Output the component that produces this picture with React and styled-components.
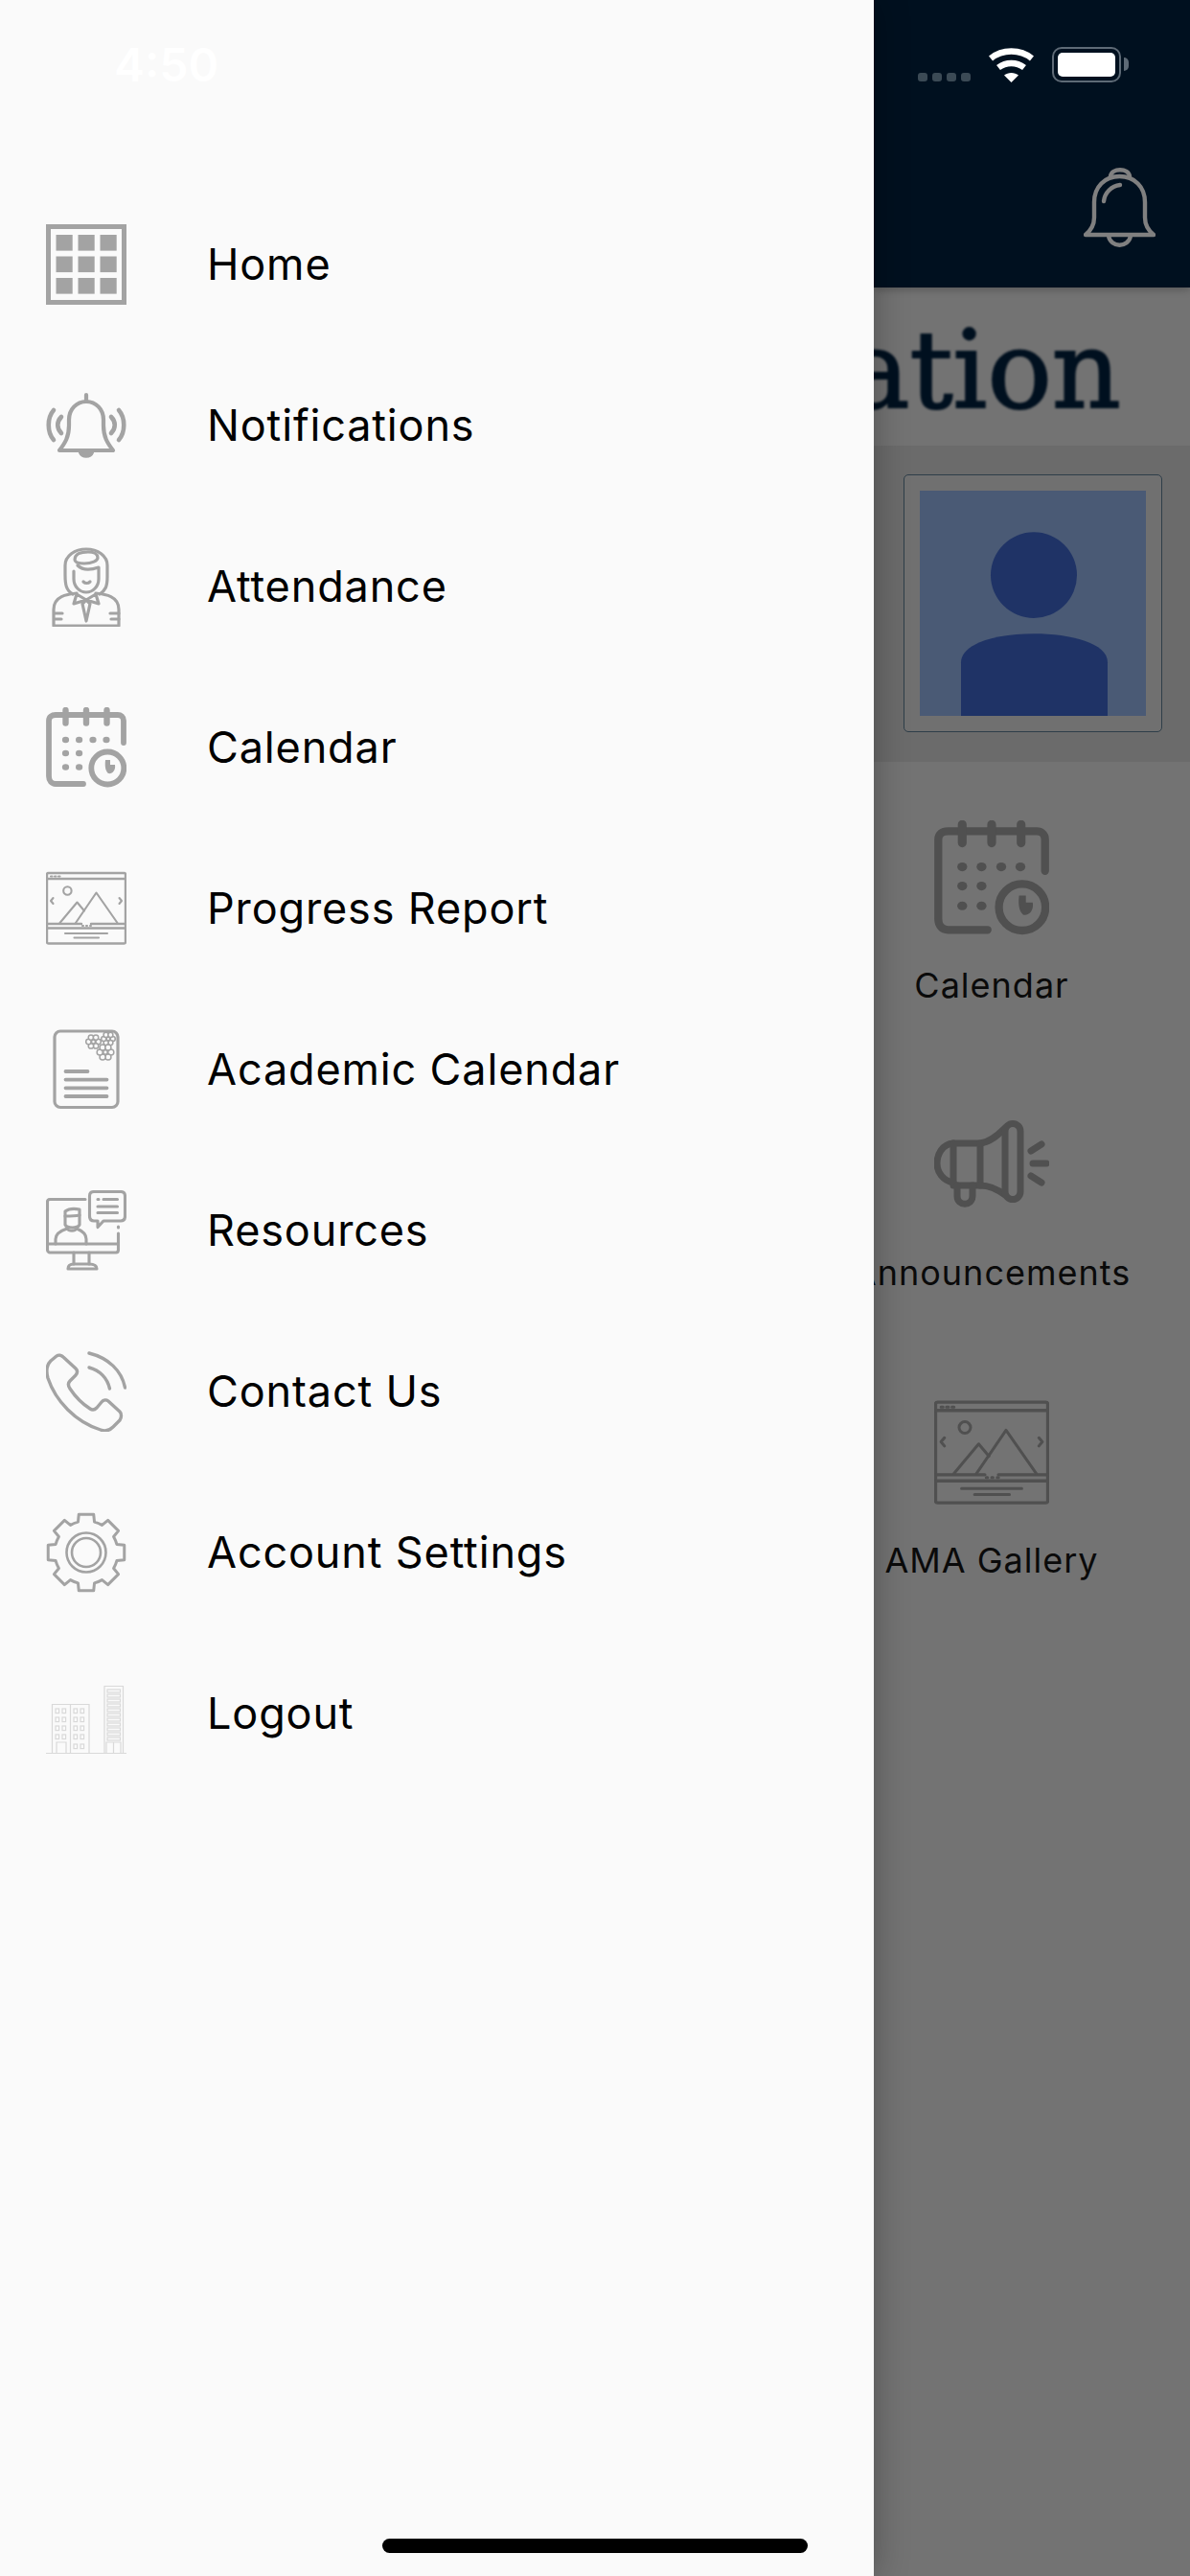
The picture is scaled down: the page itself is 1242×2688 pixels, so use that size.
import React from 'react';
import styled, {createGlobalStyle} from 'styled-components';

const GlobalStyle = createGlobalStyle`
  html, body {
    margin: 0;
    padding: 0;
    background: #737373;
  }
  * {
    box-sizing: border-box;
  }
`

// STYLED COMPONENTS START
const Page = styled.div`
  position: relative;
  width: 1242px;
  height: 2688px;
  display: flex;
  overflow: hidden;
  font-family: Inter, "Liberation Sans", sans-serif;
`

const Drawer = styled.nav`
  position: relative;
  z-index: 2;
  width: 912px;
  flex-shrink: 0;
  background: #fafafa;
  box-shadow: 0 0 34px rgba(0, 0, 0, 0.3);
`

const DrawerStatus = styled.div`
  height: 192px;
  padding: 48px 0 0 119px;
`

const Time = styled.span`
  display: block;
  font-size: 48px;
  line-height: 39px;
  font-weight: 600;
  color: #ffffff;
`

const MenuList = styled.ul`
  list-style: none;
  margin: 0;
  padding: 0;
`

const MenuRow = styled.li`
  height: 168px;
  display: flex;
  align-items: center;
  padding-left: 48px;
  gap: 84px;
`

const MenuIcon = styled.svg`
  width: 84px;
  height: 84px;
  flex-shrink: 0;
  color: ${props => props.$faded ? '#d9d9d9' : '#a3a3a3'};
`

const MenuLabel = styled.span`
  font-size: 45px;
  line-height: 56px;
  font-weight: 420;
  letter-spacing: 0.85px;
  color: #000000;
`

const HomeBar = styled.div`
  position: absolute;
  z-index: 3;
  left: 399px;
  bottom: 24px;
  width: 444px;
  height: 15px;
  border-radius: 8px;
  background: #000000;
`

const Behind = styled.main`
  flex: 1;
  min-width: 0;
  display: flex;
  flex-direction: column;
  overflow: hidden;
  background: #737373;
`

const Header = styled.header`
  position: relative;
  z-index: 1;
  height: 300px;
  flex-shrink: 0;
  display: flex;
  flex-direction: column;
  background: #00101f;
  box-shadow: 0 2px 8px rgba(0, 0, 0, 0.25);
`

const StatusIcons = styled.div`
  display: flex;
  align-items: flex-end;
  justify-content: flex-end;
  height: 86px;
  padding-right: 72px;
`

const SignalDots = styled.div`
  display: flex;
  gap: 5px;
  margin: 0 19px 1px 0;
`

const SignalDot = styled.span`
  width: 10px;
  height: 9px;
  border-radius: 3px;
  background: #3b4a55;
`

const Battery = styled.div`
  position: relative;
  width: 72px;
  height: 37px;
  margin-left: 19px;
  padding: 4px;
  border: 2.5px solid #5e6a76;
  border-radius: 10px;

  &::after {
    content: '';
    position: absolute;
    right: -10px;
    top: 9px;
    width: 5px;
    height: 14px;
    border-radius: 0 5px 5px 0;
    background: #5e6a76;
  }
`

const BatteryFill = styled.div`
  width: 100%;
  height: 100%;
  border-radius: 5px;
  background: #ffffff;
`

const BellRow = styled.div`
  display: flex;
  justify-content: flex-end;
  padding: 89px 36px 0 0;
`

const BellIcon = styled.svg`
  width: 75px;
  height: 83px;
  color: #808080;
`

const TitleBand = styled.div`
  height: 165px;
  flex-shrink: 0;
  display: flex;
  align-items: center;
  justify-content: flex-end;
  padding: 6px 72px 0 0;
  background: #737373;
`

const Title = styled.h1`
  margin: 0;
  font-family: "DejaVu Serif", "Liberation Serif", serif;
  font-size: 112px;
  line-height: 130px;
  font-weight: 400;
  white-space: nowrap;
  color: #00101f;
  -webkit-text-stroke: 2px #00101f;
  filter: blur(0.8px);
`

const ProfileBand = styled.section`
  height: 330px;
  flex-shrink: 0;
  padding: 30px 30px 0 31px;
  background: #6b6b6b;
`

const PhotoFrame = styled.div`
  width: 270px;
  height: 269px;
  padding: 16px;
  border: 1.5px solid #2e3e49;
  border-radius: 5px;
  background: #707070;
`

const AvatarIcon = styled.svg`
  display: block;
  width: 100%;
  height: 100%;
`

const Shortcuts = styled.div`
  display: flex;
  flex-direction: column;
  align-items: center;
  padding: 61px 84px 0 0;
`

const Shortcut = styled.div`
  height: 300px;
  display: flex;
  flex-direction: column;
  align-items: center;
  flex-shrink: 0;
`

const ShortcutIcon = styled.svg`
  width: 120px;
  height: 120px;
  flex-shrink: 0;
  color: #505050;
`

const ShortcutLabel = styled.span`
  margin-top: 30px;
  font-size: 36px;
  line-height: 44px;
  letter-spacing: 1px;
  white-space: nowrap;
  color: #0a0a0a;
`
// STYLED COMPONENTS END

const HomeGlyph = () => (
  <>
    <rect x="2.5" y="2.5" width="79" height="79" fill="none" stroke="currentColor" strokeWidth="5" />
    {[11, 33.5, 56].map(y => [10.5, 33.5, 56.5].map(x => (
      <rect key={`${x}-${y}`} x={x} y={y} width="17.2" height="16.6" fill="currentColor" />
    )))}
  </>
)

const NotificationGlyph = () => (
  <g fill="none" stroke="currentColor" strokeWidth="4.2" strokeLinecap="round" strokeLinejoin="round">
    <path d="M14 68 C20 60 24 54 24 42 V36 C24 25 32 17 42 17 C52 17 60 25 60 36 V42 C60 54 64 60 70 68 Z" />
    <path d="M42 10 V16" />
    <path d="M36 70 C38 75 46 75 48 70" fill="currentColor" />
    <path d="M8 26 C1 34 1 49 8 57" strokeWidth="4.6" />
    <path d="M16 33 C11 38 11 45 16 50" strokeWidth="4.6" />
    <path d="M76 26 C83 34 83 49 76 57" strokeWidth="4.6" />
    <path d="M68 33 C73 38 73 45 68 50" strokeWidth="4.6" />
  </g>
)

const AttendanceGlyph = () => (
  <g fill="none" stroke="currentColor" strokeWidth="3.2" strokeLinecap="round" strokeLinejoin="round">
    <path d="M28 50 C21 46 20 40 20 30 V20 C20 10 30 3 42 3 C54 3 64 10 64 20 V32 C64 42 62 46 56 50" />
    <path d="M30 14 C30 8 36 6 44 6 C50 6 54 8 54 12 C54 15 48 18 40 18 C34 18 30 17 30 14 Z" />
    <path d="M29 26 V34 C29 42 35 48 42 48 C49 48 55 42 55 34 V22 C46 25 38 25 33 20" />
    <path d="M39 37 C41 39 44 39 46 37" />
    <path d="M32 49 C22 50 8 52 8 66 V83 H76 V66 C76 52 62 50 52 49" />
    <path d="M42 56 L32 50 L29 60 Z M42 56 L52 50 L55 60 Z" />
    <path d="M38 60 L42 78 L46 60 L42 56 Z" />
    <path d="M9 70 H17 M9 76 H16 M67 70 H76 M68 76 H76" />
  </g>
)

const CalendarGlyph = () => (
  <>
    <g fill="none" stroke="currentColor" strokeLinecap="round" strokeLinejoin="round" strokeWidth="5.8">
      <path d="M81 37 V14 C81 10 78 8 75 8 H10 C6 8 3 10 3 14 V72 C3 77 6 80 10 80 H39" />
      <path d="M20.5 3 V16.5 M42 3 V16.5 M63.5 3 V16.5" strokeWidth="6.4" />
      <circle cx="64.3" cy="63.5" r="17" />
    </g>
    {[[20.5, 34], [34.6, 34], [49, 34], [63, 34], [20.5, 48], [34.6, 48], [20.5, 62.5], [34.6, 62.5]].map(([x, y]) => (
      <ellipse key={`${x}-${y}`} cx={x} cy={y} rx="3.6" ry="3.2" fill="currentColor" />
    ))}
    <path d="M62 55 H67 V60 H72 C73 66 69 70 65 69 C63 67 61 64 62 55 Z" fill="currentColor" />
  </>
)

const GalleryGlyph = () => (
  <g fill="none" stroke="currentColor" strokeWidth="2.1" strokeLinecap="round" strokeLinejoin="round">
    <rect x="1" y="5" width="82" height="73.5" rx="1.5" strokeWidth="2.4" />
    <path d="M1 11 H83 M1 58 H37 M47 58 H83 M1 62.5 H83" strokeWidth="2.4" />
    <path d="M5 8.5 H6.5 M9 8.5 H10.5 M13 8.5 H14.5 M38 60 H39 M42 60 H43 M46 60 H47" />
    <circle cx="22.4" cy="23.5" r="4.2" />
    <path d="M7.5 31 L5 34 L7.5 37 M76.5 31 L79 34 L76.5 37" />
    <path d="M31 57 L52.5 25.5 L74.5 57" />
    <path d="M14.5 57 L32.5 35.5 L40 44.5" />
    <path d="M20 68 H64 M29.5 72.5 H55" />
  </g>
)

const FLOWERS = [[49.5, 13, 7.5], [65, 10, 7], [62, 24, 8.5]]

const AcademicGlyph = () => (
  <g fill="none" stroke="currentColor" strokeLinecap="round">
    <rect x="9" y="2" width="66" height="79.5" rx="6" strokeWidth="3.2" />
    <path d="M20.5 44 H43.5 M20.5 52.6 H63.5 M20.5 61.3 H63.5 M20.5 70 H63.5" strokeWidth="3.8" />
    {FLOWERS.map(([cx, cy, r]) => (
      <g key={cx} strokeWidth="1.5" fill="#fafafa">
        {[0, 60, 120, 180, 240, 300].map(deg => (
          <circle
            key={deg}
            cx={cx + r * 0.68 * Math.cos(deg * Math.PI / 180)}
            cy={cy + r * 0.68 * Math.sin(deg * Math.PI / 180)}
            r={r * 0.36}
          />
        ))}
        <circle cx={cx} cy={cy} r={r * 0.26} />
      </g>
    ))}
  </g>
)

const ResourcesGlyph = () => (
  <g fill="none" stroke="currentColor" strokeWidth="3.1" strokeLinecap="round" strokeLinejoin="round">
    <path d="M41 9.5 H4 C2 9.5 1.5 11 1.5 12 V62 C1.5 64 3 65 4 65 H73 C75 65 75.5 63 75.5 62 V45" />
    <path d="M1.5 56 H75.5" />
    <path d="M75.5 38 V39" />
    <path d="M29 65 V77 M45 65 V77" />
    <path d="M23 82 C23 78 26 77 29 77 H45 C49 77 53 78 53 82 Z" />
    <path d="M10 56 V51 C10 45 16 42 22 40 C24 43 30 43 32 40 C37 42 42 45 42 51 V56" />
    <path d="M20 36 V22 C24 19 30 19 35 20 V36 C33 40 22 40 20 36 Z" />
    <path d="M20 27 C25 27 30 27 35 26" />
    <path d="M50 1.5 H78 C81 1.5 82.5 3 82.5 6 V27 C82.5 30 81 32 78 32 H60 L54 38.5 V32 H50 C47 32 45.5 30 45.5 27 V6 C45.5 3 47 1.5 50 1.5 Z" />
    <path d="M54 9.5 H55 M60 9.5 H74.5 M54 17 H74.5 M54 23.5 H74.5" />
  </g>
)

const ContactGlyph = () => (
  <g fill="none" stroke="currentColor" strokeWidth="3.4" strokeLinecap="round" strokeLinejoin="round">
    <path d="M5 10 L11 5 C13 3.5 16 4 18 6 L31 18 C33.5 20.5 33 22.5 31 25 L25 31 C23 33 23 36 25 39 C31 48 38 55 46 60 C49 62 51 61 53 59 L58 53 C60 50.5 63 50.5 65 52 L77 63 C79 65 79 69 77 72 L70 79 C66 83 62 84 57 82 C31 74 10 52 2 28 C0 21 1 14 5 10 Z" />
    <path d="M45 2 C65 7 79 20 82.5 38" />
    <path d="M45 17 C56 20 64 28 66.5 39" />
  </g>
)

// 8 teeth, each one a straight flank with an arc between the teeth
const gearPath = () => {
  const point = (deg, r) => {
    const rad = (deg - 90) * Math.PI / 180;
    return `${(42 + r * Math.cos(rad)).toFixed(2)} ${(42 + r * Math.sin(rad)).toFixed(2)}`;
  };
  let d = '';
  for (let i = 0; i < 8; i++) {
    const a = i * 45;
    d += `${i === 0 ? 'M' : 'A 33 33 0 0 1'} ${point(a - 15, 33)} `;
    d += `L ${point(a - 11, 40.5)} L ${point(a + 11, 40.5)} L ${point(a + 15, 33)} `;
  }
  return `${d}A 33 33 0 0 1 ${point(-15, 33)} Z`;
}

const SettingsGlyph = () => (
  <g fill="none" stroke="currentColor" strokeLinejoin="round">
    <path d={gearPath()} strokeWidth="3" />
    <circle cx="42" cy="42" r="20.5" strokeWidth="2.6" />
    <circle cx="42" cy="42" r="15" strokeWidth="2.6" />
  </g>
)

const LogoutGlyph = () => (
  <g fill="none" stroke="currentColor" strokeWidth="1.2">
    <path d="M0 83.5 H84" />
    <path d="M6.5 83.5 V32.5 H45 V83.5 M25.5 32.5 V83.5" />
    <path d="M61 83.5 V13.5 H80.5 V83.5" />
    {[37, 46, 55, 64].map(y => [10, 17, 29, 36].map(x => (
      <rect key={`${x}-${y}`} x={x} y={y} width="3.6" height="4.6" />
    )))}
    <rect x="29" y="74" width="3.6" height="4.6" />
    <rect x="36" y="74" width="3.6" height="4.6" />
    <path d="M11 83.5 V72 H21 V83.5 M63 83.5 V72 H78 V83.5 M70.5 72 V83.5" />
    {[17, 22, 27, 32, 37, 42, 47, 52, 57, 62, 67].map(y => (
      <rect key={y} x="64" y={y} width="13.5" height="3" />
    ))}
  </g>
)

const MegaphoneGlyph = () => (
  <g fill="none" stroke="currentColor" strokeWidth="7" strokeLinecap="round" strokeLinejoin="round">
    <path d="M20 24 C8 25 3 36 3 45 C3 54 9 63 20 65" />
    <path d="M20 24 H48 V68 H20 Z" />
    <path d="M48 24 C58 23 66 16 74 8 M48 68 C58 68 66 72 74 78" />
    <rect x="74" y="3.5" width="16" height="79" rx="8" />
    <path d="M24 68 V79 C24 90 40 90 40 79 V68" />
    <path d="M101 32 L112 25 M103 45 H117 M101 58 L112 65" />
  </g>
)

const MENU = [
  {label: 'Home', glyph: HomeGlyph},
  {label: 'Notifications', glyph: NotificationGlyph},
  {label: 'Attendance', glyph: AttendanceGlyph},
  {label: 'Calendar', glyph: CalendarGlyph},
  {label: 'Progress Report', glyph: GalleryGlyph},
  {label: 'Academic Calendar', glyph: AcademicGlyph},
  {label: 'Resources', glyph: ResourcesGlyph},
  {label: 'Contact Us', glyph: ContactGlyph},
  {label: 'Account Settings', glyph: SettingsGlyph},
  {label: 'Logout', glyph: LogoutGlyph, faded: true},
];

const App = () => {
  return (
    <Page>
      <GlobalStyle />
      <Drawer>
        <DrawerStatus>
          <Time>4:50</Time>
        </DrawerStatus>
        <MenuList>
          {MENU.map(item => (
            <MenuRow key={item.label}>
              <MenuIcon viewBox="0 0 84 84" $faded={item.faded}>
                <item.glyph />
              </MenuIcon>
              <MenuLabel>{item.label}</MenuLabel>
            </MenuRow>
          ))}
        </MenuList>
      </Drawer>
      <Behind>
        <Header>
          <StatusIcons>
            <SignalDots>
              <SignalDot /><SignalDot /><SignalDot /><SignalDot />
            </SignalDots>
            <svg width="47" height="36" viewBox="0 0 47 36">
              <g fill="none" stroke="#ffffff" strokeWidth="6.5">
                <path d="M2 11 C14 1 33 1 45 11" />
                <path d="M10 20.5 C18 14.5 29 14.5 37 20.5" />
              </g>
              <path d="M16 28.5 C20 25 27 25 31 28.5 L23.5 36 Z" fill="#ffffff" />
            </svg>
            <Battery>
              <BatteryFill />
            </Battery>
          </StatusIcons>
          <BellRow>
            <BellIcon viewBox="0 0 75 83">
              <g fill="none" stroke="currentColor" strokeWidth="4.4" strokeLinecap="round" strokeLinejoin="round">
                <path d="M2 70 H73 C67 65 64 60 64 52 V36 C64 20 53 9 37.5 9 C22 9 11 20 11 36 V52 C11 60 8 65 2 70 Z" />
                <path d="M28 9 C29 0 47 0 48 9" />
                <path d="M26 71 C28 84 47 84 49 71" />
                <path d="M21 35 C22 26 29 19 38 18" />
              </g>
            </BellIcon>
          </BellRow>
        </Header>
        <TitleBand>
          <Title>ation</Title>
        </TitleBand>
        <ProfileBand>
          <PhotoFrame>
            <AvatarIcon viewBox="0 0 236 236" preserveAspectRatio="none">
              <rect width="236" height="236" fill="#4a5a75" />
              <circle cx="119" cy="88.5" r="45" fill="#1f3366" />
              <path d="M43 236 V180 C43 160 80 150 119 150 C158 150 196 160 196 180 V236 Z" fill="#1f3366" />
            </AvatarIcon>
          </PhotoFrame>
        </ProfileBand>
        <Shortcuts>
          <Shortcut>
            <ShortcutIcon viewBox="0 0 84 84"><CalendarGlyph /></ShortcutIcon>
            <ShortcutLabel>Calendar</ShortcutLabel>
          </Shortcut>
          <Shortcut>
            <ShortcutIcon viewBox="0 -13 120 120"><MegaphoneGlyph /></ShortcutIcon>
            <ShortcutLabel>Announcements</ShortcutLabel>
          </Shortcut>
          <Shortcut>
            <ShortcutIcon viewBox="0 0 84 84"><GalleryGlyph /></ShortcutIcon>
            <ShortcutLabel>AMA Gallery</ShortcutLabel>
          </Shortcut>
        </Shortcuts>
      </Behind>
      <HomeBar />
    </Page>
  )
}

export default App;
